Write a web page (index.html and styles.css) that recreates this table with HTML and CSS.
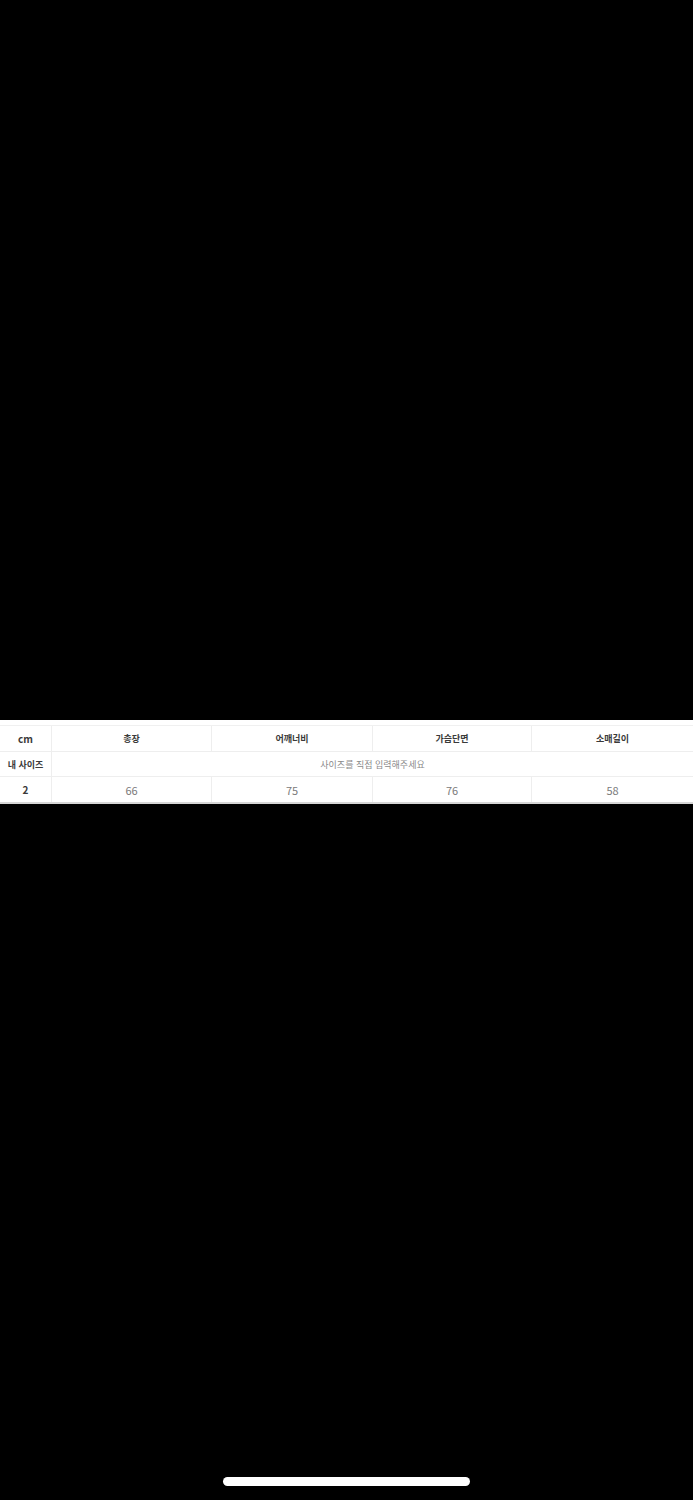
FILE: index.html
```html
<!DOCTYPE html>
<html lang="ko">
<head>
<meta charset="utf-8">
<link rel="stylesheet" href="styles.css">
</head>
<body>
<div class="screen">
  <div class="spacer-top"></div>
  <section class="size-sheet">
    <div class="size-grid">
      <div class="cell head latin">cm</div>
      <div class="cell head">총장</div>
      <div class="cell head">어깨너비</div>
      <div class="cell head">가슴단면</div>
      <div class="cell head last">소매길이</div>

      <div class="cell head">내 사이즈</div>
      <div class="cell hint span4">사이즈를 직접 입력해주세요</div>

      <div class="cell head latin">2</div>
      <div class="cell val">66</div>
      <div class="cell val">75</div>
      <div class="cell val">76</div>
      <div class="cell val last">58</div>
    </div>
  </section>
  <div class="spacer-bottom">
    <div class="home-indicator"></div>
  </div>
</div>
</body>
</html>
```

FILE: styles.css
```css
html, body {
  margin: 0;
  padding: 0;
  background: #000;
}
.screen {
  width: 693px;
  height: 1500px;
  display: flex;
  flex-direction: column;
  font-family: "Noto Sans CJK KR", "Noto Sans", sans-serif;
}
.spacer-top {
  height: 720px;
  flex: none;
}
.size-sheet {
  background: #fff;
  padding-top: 5px;
  border-bottom: 2px solid #d6d6d6;
  flex: none;
}
.size-grid {
  display: grid;
  grid-template-columns: 52px 160px 161px 159px 161px;
  grid-template-rows: 26px 25px 25px;
  border-top: 1px solid #f0f0f0;
}
.cell {
  display: flex;
  align-items: center;
  justify-content: center;
  font-size: 9px;
  color: #555;
  border-right: 1px solid #eeeeee;
  border-bottom: 1px solid #eeeeee;
  box-sizing: border-box;
}
.cell.last {
  border-right: none;
}
.size-grid > .cell:nth-last-child(-n+5) {
  border-bottom: none;
}
.head {
  font-weight: 700;
  color: #3a3a3a;
}
.latin {
  font-size: 10px;
}
.val {
  color: #7a7a7a;
  font-size: 11px;
}
.hint {
  color: #8a8a8a;
  border-right: none;
}
.span4 {
  grid-column: span 4;
}
.spacer-bottom {
  flex: 1;
  display: flex;
  justify-content: center;
  align-items: flex-end;
  padding-bottom: 14px;
}
.home-indicator {
  width: 247px;
  height: 9px;
  border-radius: 5px;
  background: #fff;
}
```
